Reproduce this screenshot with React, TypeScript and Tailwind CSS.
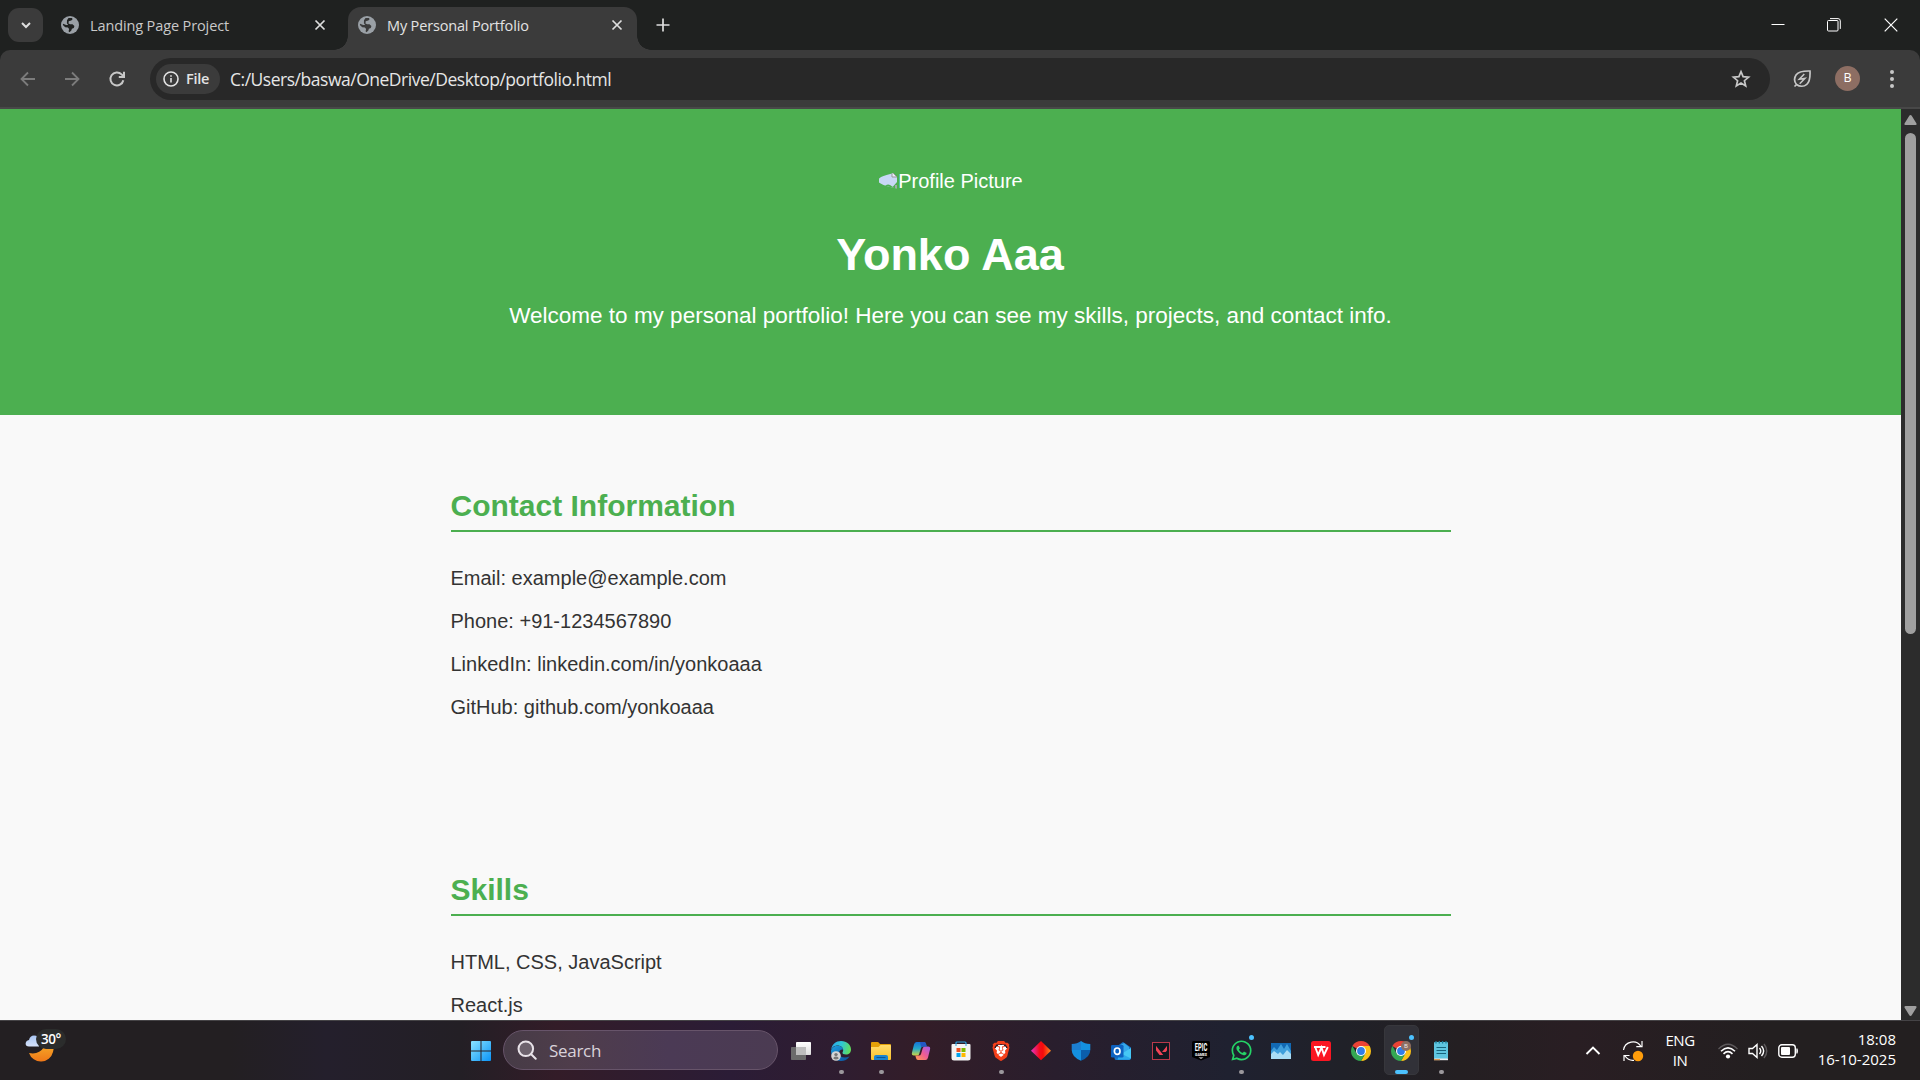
import React from "react";
import { SiBrave, SiValorant } from "react-icons/si";
import { FaWhatsapp } from "react-icons/fa";

const UI = "font-['Open_Sans','Noto_Sans',sans-serif]";

type StrokeProps = { d: string; size?: number; className?: string; width?: number };

function Stroke({ d, size = 20, className = "", width = 1.8 }: StrokeProps) {
  return (
    <svg width={size} height={size} viewBox="0 0 20 20" fill="none" stroke="currentColor" strokeWidth={width} className={className}>
      <path d={d} />
    </svg>
  );
}

function Globe({ land }: { land: string }) {
  return (
    <svg width="18" height="18" viewBox="0 0 18 18" className="shrink-0">
      <circle cx="9" cy="9" r="9" fill="#9aa0a6" />
      <path d="M7.500 2L11 1.900l.6 1.400-1.300 1.300-2.600.7-.2 2.300 1.700.7h2.300l1.900 1.700-.6 1.900-1.900.8-.7 2.100-1.900 1.400-.7-1 .5-2.300-1.200-1.300-2.700-.3-2.300-2.300.1-1.200 3.200 1.200h1.900L5.900 7.300l.1-3z" fill={land} />
    </svg>
  );
}

function TabStrip() {
  return (
    <div className="flex h-[50px] bg-[#1f2120] text-[#dedede]">
      <div className="mt-2 ml-2 flex h-[34px] w-[35px] items-center justify-center rounded-[11px] bg-[#3b3b3b]">
        <Stroke d="M6 8l4 4 4-4" width={2} />
      </div>
      <div className="flex h-[50px] w-[289px] items-center pl-[18px]">
        <Globe land="#1f2120" />
        <span className="mt-[2px] ml-[11px] w-[220px] text-[14.5px] tracking-[-0.12px] whitespace-nowrap text-[#c9c9c9]">Landing Page Project</span>
        <Stroke d="M5.5 5.5l9 9M14.5 5.5l-9 9" className="shrink-0" width={1.7} />
      </div>
      <div className="relative ml-[16px] mt-[7px] flex h-[43px] w-[289px] items-center rounded-t-[13px] bg-[#3b3b3b] pb-[7px] pl-[10px]">
        <div className="absolute bottom-0 -left-[14px] size-[14px] bg-[radial-gradient(circle_at_0_0,#1f2120_13.5px,#3b3b3b_14px)]" />
        <div className="absolute bottom-0 -right-[14px] size-[14px] bg-[radial-gradient(circle_at_100%_0,#1f2120_13.5px,#3b3b3b_14px)]" />
        <Globe land="#3b3b3b" />
        <span className="mt-[2px] ml-[11px] w-[220px] text-[14.5px] tracking-[-0.16px] whitespace-nowrap text-[#e3e3e3]">My Personal Portfolio</span>
        <Stroke d="M5.5 5.5l9 9M14.5 5.5l-9 9" className="shrink-0" width={1.7} />
      </div>
      <div className="flex h-[50px] w-[52px] items-center justify-center">
        <Stroke d="M10 3.5v13M3.5 10h13" width={1.7} />
      </div>
      <div className="ml-auto flex h-[49px] text-white">
        <div className="flex w-[57px] items-center justify-center">
          <svg width="14" height="14" fill="none" stroke="currentColor"><path d="M.5 6.500h13" /></svg>
        </div>
        <div className="flex w-[56px] items-center justify-center">
          <svg width="14" height="14" fill="none" stroke="currentColor"><rect x=".5" y="2.500" width="10.500" height="10.500" rx="1" /><path d="M3 .6h8q2.300 0 2.300 2.300v8" /></svg>
        </div>
        <div className="flex w-[58px] items-center justify-center">
          <svg width="14" height="14" fill="none" stroke="currentColor" strokeWidth="1.200"><path d="M.7.700l12.600 12.600M13.300.700L.7 13.300" /></svg>
        </div>
      </div>
    </div>
  );
}

function Toolbar() {
  return (
    <div className="bg-[#1f2120]">
      <div className="flex h-[59px] items-center rounded-t-[10px] border-b-2 border-[#484848] bg-[#3b3b3b] text-[#c7c7c7]">
        <Stroke d="M17 10H4M10 3.500L3.500 10l6.500 6.500" className="ml-[18px] text-[#7c7c7c]" />
        <Stroke d="M3 10h13M10 3.500l6.500 6.500-6.500 6.500" className="ml-[24px] text-[#7c7c7c]" />
        <svg width="20" height="20" viewBox="0 0 20 20" className="ml-[25px]" fill="none" stroke="currentColor" strokeWidth="2">
          <path d="M16.300 11.200A6.500 6.500 0 1 1 14.600 5.400L16.500 7.300M17 2.800v5.200h-5.200" />
        </svg>
        <div className="ml-[23px] flex h-[42px] w-[1620px] items-center rounded-full bg-[#282828] pl-[6px]">
          <div className="flex h-[30px] w-[64px] items-center rounded-full bg-[#3b3b3b] pl-[7px] text-[#e3e3e3]">
            <svg width="16" height="16" viewBox="0 0 16 16" fill="none" stroke="currentColor" strokeWidth="1.600">
              <circle cx="8" cy="8" r="7" /><path d="M8 7v4.500M8 4.300v1.500" />
            </svg>
            <span className={`${UI} ml-[7px] text-[14.5px] font-semibold tracking-[-0.3px]`}>File</span>
          </div>
          <span className="mt-[2px] ml-[10px] text-[17.500px] tracking-[-0.480px] whitespace-nowrap text-[#e6e6e6]">C:/Users/baswa/OneDrive/Desktop/portfolio.html</span>
          <svg width="20" height="20" viewBox="0 0 20 20" className="mr-[19px] ml-auto" fill="none" stroke="currentColor" strokeWidth="1.700">
            <path d="M10 2.600l2.100 5 5.500.500-4.200 3.600 1.300 5.300-4.700-2.900L5.300 17l1.300-5.300L2.400 8.100l5.500-.5z" />
          </svg>
        </div>
        <svg width="20" height="20" viewBox="0 0 20 20" className="ml-[22px]" fill="none" stroke="currentColor" strokeWidth="1.700">
          <path d="M2.500 17.500l2-2C2.300 12.800 2 9 4.200 5.800 6.500 2.700 11 1.800 18 2c.3 6.500-.5 11-3.200 13.300-3 2.700-7.300 2.400-10.300.2" />
          <path d="M12.300 5l-5 5.200 5.700-.8-5.300 5.300" strokeWidth="1.500" />
        </svg>
        <div className={`${UI} ml-[23px] flex size-[25px] items-center justify-center rounded-full bg-[#8d6e63] text-[12.5px] text-white`}>B</div>
        <div className="ml-[30px] flex flex-col gap-[3px]">
          <i className="size-1 rounded-full bg-[#c7c7c7]" />
          <i className="size-1 rounded-full bg-[#c7c7c7]" />
          <i className="size-1 rounded-full bg-[#c7c7c7]" />
        </div>
      </div>
    </div>
  );
}

function Section({ title, items }: { title: string; items: string[] }) {
  return (
    <section className="w-[1000px]">
      <h2 className="h-[50px] border-b-2 border-[#4caf50] text-[30px] leading-[48px] font-bold text-[#4caf50]">{title}</h2>
      <ul className="mt-[25px] text-[20px] leading-[43px] text-[#333]">
        {items.map((t) => <li key={t}>{t}</li>)}
      </ul>
    </section>
  );
}

function Portfolio() {
  return (
    <main className="h-[911px] w-[1901px] overflow-hidden bg-[#f9f9f9] font-['Liberation_Sans',Arial,sans-serif]">
      <header className="flex h-[306px] flex-col items-center bg-[#4caf50] text-white">
        <div className="mt-[60px] flex h-[23px] items-center overflow-hidden rounded-[50%] text-[20px] leading-[22px]">
          <svg width="20" height="20" viewBox="0 0 20 20">
            <path d="M1 1h13l5 5v13H1z" fill="#c8d8f6" />
            <path d="M14 1v5h5z" fill="#e9eef8" stroke="#979797" />
            <path d="M4 19q4-7 8-5l3 2-3 3z" fill="#4caf50" />
            <path d="M12 19l7-8v8z" fill="#4caf50" />
            <path d="M17 14h2v4h-2z" fill="#9eaaa8" />
          </svg>
          <span>Profile Picture</span>
        </div>
        <h1 className="mt-[27px] mr-px text-[45px] leading-[72px] font-bold">Yonko Aaa</h1>
        <p className="mt-[7px] text-[22.500px] leading-[36px] whitespace-nowrap">Welcome to my personal portfolio! Here you can see my skills, projects, and contact info.</p>
      </header>
      <div className="flex flex-col items-center gap-[137px] pt-[67px]">
        <Section title="Contact Information" items={["Email: example@example.com", "Phone: +91-1234567890", "LinkedIn: linkedin.com/in/yonkoaaa", "GitHub: github.com/yonkoaaa"]} />
        <Section title="Skills" items={["HTML, CSS, JavaScript", "React.js"]} />
      </div>
    </main>
  );
}

function Scrollbar() {
  return (
    <div className="flex h-[911px] w-[19px] flex-col items-center bg-[#2c2c2c]">
      <svg width="13" height="10" className="mt-[6px] shrink-0" fill="#9f9f9f"><path d="M6.500 0q.8 0 1.200.700l4.800 7.800q.5 1.500-1 1.500h-10q-1.500 0-1-1.500L5.300.7Q5.700 0 6.500 0z" /></svg>
      <div className="mt-[8px] h-[501px] w-[11px] rounded-full bg-[#9f9f9f]" />
      <svg width="13" height="10" className="mt-auto mb-[4px] shrink-0" fill="#9f9f9f"><path d="M6.500 10q.8 0 1.200-.7l4.800-7.800q.5-1.500-1-1.500h-10q-1.500 0-1 1.500l4.800 7.800q.4.700 1.200.7z" /></svg>
    </div>
  );
}

function Chrome({ profile = false }: { profile?: boolean }) {
  return (
    <svg width="20" height="20" viewBox="0 0 20 20">
      <path d="M10 10L1.340 5A10 10 0 0 1 18.660 5z" fill="#ea4335" />
      <path d="M10 5H18.660A10 10 0 0 1 10 20L14.300 12.500z" fill="#fbc116" />
      <path d="M1.340 5A10 10 0 0 0 10 20L14.330 12.500H5.670z" fill="#34a853" />
      <circle cx="10" cy="10" r="5" fill="#fff" />
      <circle cx="10" cy="10" r="3.900" fill="#2f7de9" />
      {profile && <circle cx="15" cy="5" r="5" fill="#8d6e63" />}
      {profile && <text x="15" y="7.300" textAnchor="middle" fontSize="6" fill="#eee" fontFamily="Open Sans">B</text>}
    </svg>
  );
}

const icons: { el: React.ReactNode; dot?: boolean; badge?: boolean; active?: boolean }[] = [
  {
    el: (
      <svg width="20" height="20" viewBox="0 0 20 20">
        <defs><linearGradient id="tv" x2="0" y2="1"><stop stopColor="#fff" /><stop offset="1" stopColor="#ddd" /></linearGradient></defs>
        <rect x="5" y="1" width="15" height="13" rx=".8" fill="url(#tv)" />
        <rect x="0" y="6" width="15" height="13" rx=".8" fill="#6b6b6b" />
        <rect x="5" y="6" width="10" height="8" fill="#bdbdbd" />
      </svg>
    ),
  },
  {
    dot: true,
    el: (
      <svg width="20" height="20" viewBox="0 0 20 20">
        <defs>
          <linearGradient id="e1" x1="0" y1=".3" x2="1" y2=".5"><stop stopColor="#2aa8ea" /><stop offset=".5" stopColor="#2fc7d5" /><stop offset="1" stopColor="#62dd5a" /></linearGradient>
          <linearGradient id="e2" x2="1" y2="1"><stop stopColor="#1ca0e0" /><stop offset="1" stopColor="#0b4f9c" /></linearGradient>
        </defs>
        <path d="M0 9C1 3 5 0 10 0c6 0 10 4 10 8.500 0 3-2 5-5 5-2.500 0-3.800-1-3.500-2 .5-1.200.7-1.800.7-2.500C12 6 9 4.500 6 4.600 3 4.700 1 6.500 0 9z" fill="url(#e1)" />
        <path d="M0 9.500C1 6.500 3.500 4.800 6.500 4.700 10 4.700 12 6.500 12.200 8.500 9.500 8 7.800 10 8 12.500c.3 3.500 5 5.500 10.500 3C16.500 18.500 13.500 20 10 20 4 20 0 15.500 0 9.500z" fill="url(#e2)" />
        <circle cx="5" cy="15" r="4.800" fill="#d4d4d4" />
        <circle cx="5" cy="13.600" r="1.700" fill="#777" /><path d="M2.300 17.600q0-2 2.700-2t2.700 2q-2.700 2-5.400 0z" fill="#777" />
      </svg>
    ),
  },
  {
    dot: true,
    el: (
      <svg width="20" height="20" viewBox="0 0 20 20">
        <defs><linearGradient id="fo" x2="0" y2="1"><stop stopColor="#ffdc6b" /><stop offset="1" stopColor="#fbc02a" /></linearGradient></defs>
        <path d="M0 2q0-1 1-1h5.500q.8 0 1.200.5L9 3h10q1 0 1 1v4H0z" fill="#e3a008" />
        <path d="M0 6h7.500L9.500 4H19q1 0 1 1v13q0 1-1 1H1q-1 0-1-1z" fill="url(#fo)" />
        <path d="M3 19v-3q0-2 2-2h10q2 0 2 2v3z" fill="#1b84cf" /><path d="M5.500 16.500h9" stroke="#0c5597" strokeWidth="1" />
      </svg>
    ),
  },
  {
    el: (
      <svg width="20" height="20" viewBox="0 0 20 20">
        <defs>
          <linearGradient id="c1" x2="0" y2="1"><stop stopColor="#1473d8" /><stop offset=".5" stopColor="#25a9c9" /><stop offset="1" stopColor="#c9d544" /></linearGradient>
          <linearGradient id="c2" x1="1" x2="0" y2="1"><stop stopColor="#a05cf0" /><stop offset=".5" stopColor="#ef5c92" /><stop offset="1" stopColor="#ffa04d" /></linearGradient>
        </defs>
        <path d="M5.500 1H13q1.600 0 2 2l.7 2.500H12q-1.500 0-2 1.600L8.200 13q-.5 1.500-2 1.500H3q-2.800 0-2-3L3 3.500Q3.600 1 5.500 1z" fill="url(#c1)" />
        <path d="M14.500 19H7q-1.600 0-2-2l-.7-2.500H8q1.500 0 2-1.600L11.800 7q.5-1.500 2-1.500H17q2.800 0 2 3l-2 8q-.6 2.500-2.500 2.500z" fill="url(#c2)" />
        <path d="M9 1h4q1.600 0 2 2l.7 2.500H12q-1.500 0-1.800 1z" fill="#2257c5" />
      </svg>
    ),
  },
  {
    el: (
      <svg width="20" height="20" viewBox="0 0 20 20">
        <path d="M5 5V2q0-1 1-1h8q1 0 1 1v3" fill="none" stroke="#2ca6e3" strokeWidth="1.200" />
        <path d="M.5 4q0-1 1-1h17q1 0 1 1v13q0 2.500-2.500 2.500H3Q.5 19.500.5 17z" fill="#f4f4f4" />
        <path d="M5 5V3M15 5V3" stroke="#2ca6e3" />
        <path d="M5.500 7h4v4h-4z" fill="#f05022" /><path d="M10.500 7h4v4h-4z" fill="#7fba00" />
        <path d="M5.500 12h4v4h-4z" fill="#00a4ef" /><path d="M10.500 12h4v4h-4z" fill="#ffb900" />
      </svg>
    ),
  },
  {
    dot: true,
    el: <SiBrave className="size-[20px] bg-[radial-gradient(circle,#fff_6px,transparent_6.5px)] text-[#f5401a]" />,
  },
  {
    el: (
      <svg width="20" height="20" viewBox="0 0 20 20">
        <defs><linearGradient id="di"><stop stopColor="#e237c8" /><stop offset=".42" stopColor="#f50b1c" /><stop offset=".6" stopColor="#f50b0b" /><stop offset="1" stopColor="#ff8a22" /></linearGradient></defs>
        <path d="M10 0l10 9.700L10 19.300 0 9.700z" fill="url(#di)" />
      </svg>
    ),
  },
  {
    el: (
      <svg width="20" height="20" viewBox="0 0 20 20">
        <path d="M10 0C7.500 2 4.500 2.800.7 3v6h9.300z" fill="#1c7fd0" /><path d="M10 0c2.500 2 5.500 2.800 9.300 3v6H10z" fill="#1490df" />
        <path d="M.7 9q0 7 9.300 10.700V9z" fill="#1490df" /><path d="M19.300 9q0 7-9.300 10.700V9z" fill="#0b5eab" />
      </svg>
    ),
  },
  {
    el: (
      <svg width="20" height="20" viewBox="0 0 20 20">
        <path d="M3.500 7L12 1l8 5.500V17q0 2-2 2H5q-1.500 0-1.500-2z" fill="#1674c9" />
        <path d="M8 5l5-3 5 4v5l-8 3z" fill="#36a9ea" /><path d="M20 7L7 15v3.500h11q2 0 2-2z" fill="#45c8f5" />
        <path d="M20 17.500L9 12l-3 7h12z" fill="#1b95e5" opacity=".6" />
        <rect y="4" width="12.500" height="12.500" rx="1.300" fill="#0d62c0" />
        <ellipse cx="6.200" cy="10.200" rx="2.800" ry="3.200" fill="none" stroke="#fff" strokeWidth="1.700" />
      </svg>
    ),
  },
  {
    el: (
      <div className="flex size-[18px] items-center justify-center border border-[#b83a4b] bg-[#101820]">
        <SiValorant className="size-[11px] text-[#ef4456]" />
      </div>
    ),
  },
  {
    el: (
      <svg width="20" height="20" viewBox="0 0 20 20" className="overflow-visible">
        <path d="M1 1.500Q1 0 2.500 0h15Q19 0 19 1.500V16l-9 3.500L1 16z" fill="#000" />
        <text x="3.700" y="10" fontFamily="Roboto" fontWeight="700" fontSize="10" textLength="12.600" lengthAdjust="spacingAndGlyphs" fill="#fff">EPIC</text>
        <text x="4" y="14.500" fontFamily="Roboto" fontWeight="700" fontSize="4" textLength="12" lengthAdjust="spacingAndGlyphs" fill="#fff">GAMES</text>
        <path d="M7.500 16.500h5L10 17.700z" fill="#fff" />
      </svg>
    ),
  },
  { dot: true, badge: true, el: <FaWhatsapp className="size-[23px] text-[#25d366]" /> },
  {
    el: (
      <svg width="20" height="16" viewBox="0 0 20 16">
        <path d="M0 0h20v16H0z" fill="#1269b3" />
        <path d="M0 8l3-4 3 3 4-6 3 5 3-5 4 7v8H0z" fill="#3f9fdc" />
        <path d="M0 11l3-3 4 3 2-2 3 3 4-5 4 4v5H0z" fill="#a9dcf5" />
      </svg>
    ),
  },
  {
    el: (
      <svg width="20" height="20" viewBox="0 0 20 20">
        <rect width="20" height="20" rx="2.500" fill="#fb1622" />
        <path d="M3 6h11.500M4.200 6l3 8 3.300-7.500L13 14l3.800-8" fill="none" stroke="#fff" strokeWidth="1.900" />
      </svg>
    ),
  },
  { el: <Chrome /> },
  { active: true, badge: true, el: <Chrome profile /> },
  {
    dot: true,
    el: (
      <svg width="16" height="20" viewBox="0 0 16 20">
        <rect x="1" y="1" width="14" height="17" rx="1" fill="#5fc5df" />
        <path d="M1 17.500h14v1.700H1z" fill="#e9eef0" /><path d="M1 18.700h6" stroke="#e0852b" />
        <path d="M3.500 6.500h9.500M3.500 9.500h9.500M3.500 12.500h9.500" stroke="#17647c" strokeWidth="1.200" />
        <path d="M3 0v2.500M6.300 0v2.500M9.600 0v2.500M13 0v2.500" stroke="#1b7b96" strokeWidth="1.300" />
      </svg>
    ),
  },
];

function Taskbar() {
  return (
    <footer className={`${UI} flex h-[60px] border-t border-[#454346] bg-[linear-gradient(90deg,#231f22_0%,#231f22_12%,#241f2c_17%,#231f25_24%,#331c28_29%,#2b1c36_38%,#2f1d30_44%,#331d28_48%,#291e2d_55%,#1f2130_64%,#202128_70%,#241f22_76%,#291e23_82%,#231f20_92%,#231f20_100%)] text-white`}>
      <div className="w-[470px] pt-[9px] pl-[25px]">
        <div className="relative h-[36px] w-[44px]">
          <svg width="30" height="34" viewBox="0 0 30 34">
            <defs>
              <linearGradient id="mo" x2="0" y2="1"><stop stopColor="#f7b52c" /><stop offset="1" stopColor="#f07818" /></linearGradient>
              <linearGradient id="cl" x2="0" y2="1"><stop stopColor="#a9c5f3" /><stop offset="1" stopColor="#d5e2fa" /></linearGradient>
            </defs>
            <path d="M18 10h8q4 5 2 12a12.500 12.500 0 0 1-24 1q10 2 15-6z" fill="url(#mo)" />
            <path d="M4 16.500c-5 0-4-6 0-6.500Q5 5.500 9 5.500q5 0 5 4.500v6.500z" fill="url(#cl)" />
          </svg>
          <span className="absolute -top-px left-[11px] flex h-[20px] w-[30px] items-center justify-center rounded-full bg-[#2b2c2c] text-[13.5px] font-semibold tracking-[-0.4px]">30°</span>
        </div>
      </div>
      <div className="flex w-[33px] items-center pl-px">
        <svg width="20" height="20" viewBox="0 0 20 20">
          <defs><linearGradient id="wi" x2="1" y2="1"><stop stopColor="#8be3ff" /><stop offset="1" stopColor="#0a94f8" /></linearGradient></defs>
          <path d="M1 0h8.500v9.500H0V1q0-1 1-1zM10.500 0H19q1 0 1 1v8.500h-9.500zM0 10.500h9.500V20H1q-1 0-1-1zM10.500 10.500H20V19q0 1-1 1h-8.500z" fill="url(#wi)" />
        </svg>
      </div>
      <div className="mt-[9px] flex h-10 w-[275px] items-center rounded-full border border-[#67546a] bg-[linear-gradient(90deg,#463b46,#4f3d4b_25%,#4b3a55_60%,#4b3b52)] pl-[13px]">
        <svg width="20" height="20" viewBox="0 0 20 20" fill="none" stroke="#e8e2e8" strokeWidth="2">
          <circle cx="8.800" cy="8.800" r="7.300" fill="#6d626d" /><path d="M14.200 14.200l4.500 4.500" strokeLinecap="round" />
        </svg>
        <span className="mt-px ml-[12px] text-[17px] tracking-[-0.3px] text-[#d9d2da]">Search</span>
      </div>
      <div className="ml-[3px] flex">
        {icons.map((it, i) => (
          <div key={i} className="relative flex h-[59px] w-10 items-center justify-center">
            {it.active && <span className="absolute top-[4px] left-[3px] h-[50px] w-[35px] rounded-[5px] border border-[#37373c] bg-[#313138]" />}
            <span className="relative">{it.el}</span>
            {it.badge && <span className="absolute top-[14px] right-[7px] size-[5px] rounded-full bg-[#4cc2ff]" />}
            {it.dot && <span className="absolute bottom-[6px] left-[18px] h-1 w-[5px] rounded-full bg-[#9b989c]" />}
            {it.active && <span className="absolute bottom-[6px] left-[14px] h-1 w-[13px] rounded-full bg-[#4cc2ff]" />}
          </div>
        ))}
      </div>
      <div className="ml-auto flex items-center">
        <Stroke d="M3.500 13L10 6.500l6.500 6.500" className="mr-[19px]" width={1.900} />
        <svg width="22" height="22" viewBox="0 0 22 22" fill="none" stroke="#fff" strokeWidth="1.200" className="mr-[18px]">
          <path d="M1.500 10A9.500 9.500 0 0 1 19 6.500M20 1v5.700h-5.700M12 20.300Q6.500 21 3 16M2 21v-5.500h5.500" />
          <circle cx="16" cy="16" r="5.200" fill="#ff9d0b" stroke="none" />
        </svg>
        <div className="mb-[2px] w-[36px] text-center text-[15px] leading-[20px] tracking-[-0.45px]">ENG<br />IN</div>
        <svg width="20" height="16" viewBox="0 0 20 16" fill="none" stroke="#fff" strokeWidth="1.600" className="ml-[20px]">
          <path d="M.5 6Q10-3.500 19.500 6" stroke="#5d595b" strokeWidth="1.200" />
          <path d="M3 8.300Q10 1.500 17 8.300M5.500 10.800Q10 6.500 14.500 10.800" />
          <circle cx="10" cy="13.500" r="2.100" fill="#fff" stroke="none" />
        </svg>
        <svg width="21" height="18" viewBox="0 0 21 18" fill="none" stroke="#fff" strokeWidth="1.400" className="ml-[10px]">
          <path d="M1 6.500h3.500L9 2.500v13L4.500 11.500H1zM11.500 6q2.500 3 0 6M13.500 4q4.300 5 0 10" />
          <path d="M16 2q5.500 7 0 14" stroke="#5d595b" />
        </svg>
        <svg width="21" height="14" viewBox="0 0 21 14" className="ml-[9px]">
          <rect x=".8" y=".8" width="16.500" height="12.400" rx="3" fill="none" stroke="#fff" strokeWidth="1.400" />
          <rect x="3" y="3" width="9" height="8" rx="1" fill="#fff" /><path d="M18.300 4.500h1.200q1 2.500 0 5h-1.200z" fill="#fff" />
        </svg>
        <div className="mr-[24px] mb-[4px] w-[97px] text-right text-[15px] leading-[20px] tracking-[0.010px]">18:08<br />16-10-2025</div>
      </div>
    </footer>
  );
}

export default function App() {
  return (
    <div className={`${UI} flex h-[1080px] w-[1920px] flex-col overflow-hidden`}>
      <TabStrip />
      <Toolbar />
      <div className="flex">
        <Portfolio />
        <Scrollbar />
      </div>
      <Taskbar />
    </div>
  );
}
